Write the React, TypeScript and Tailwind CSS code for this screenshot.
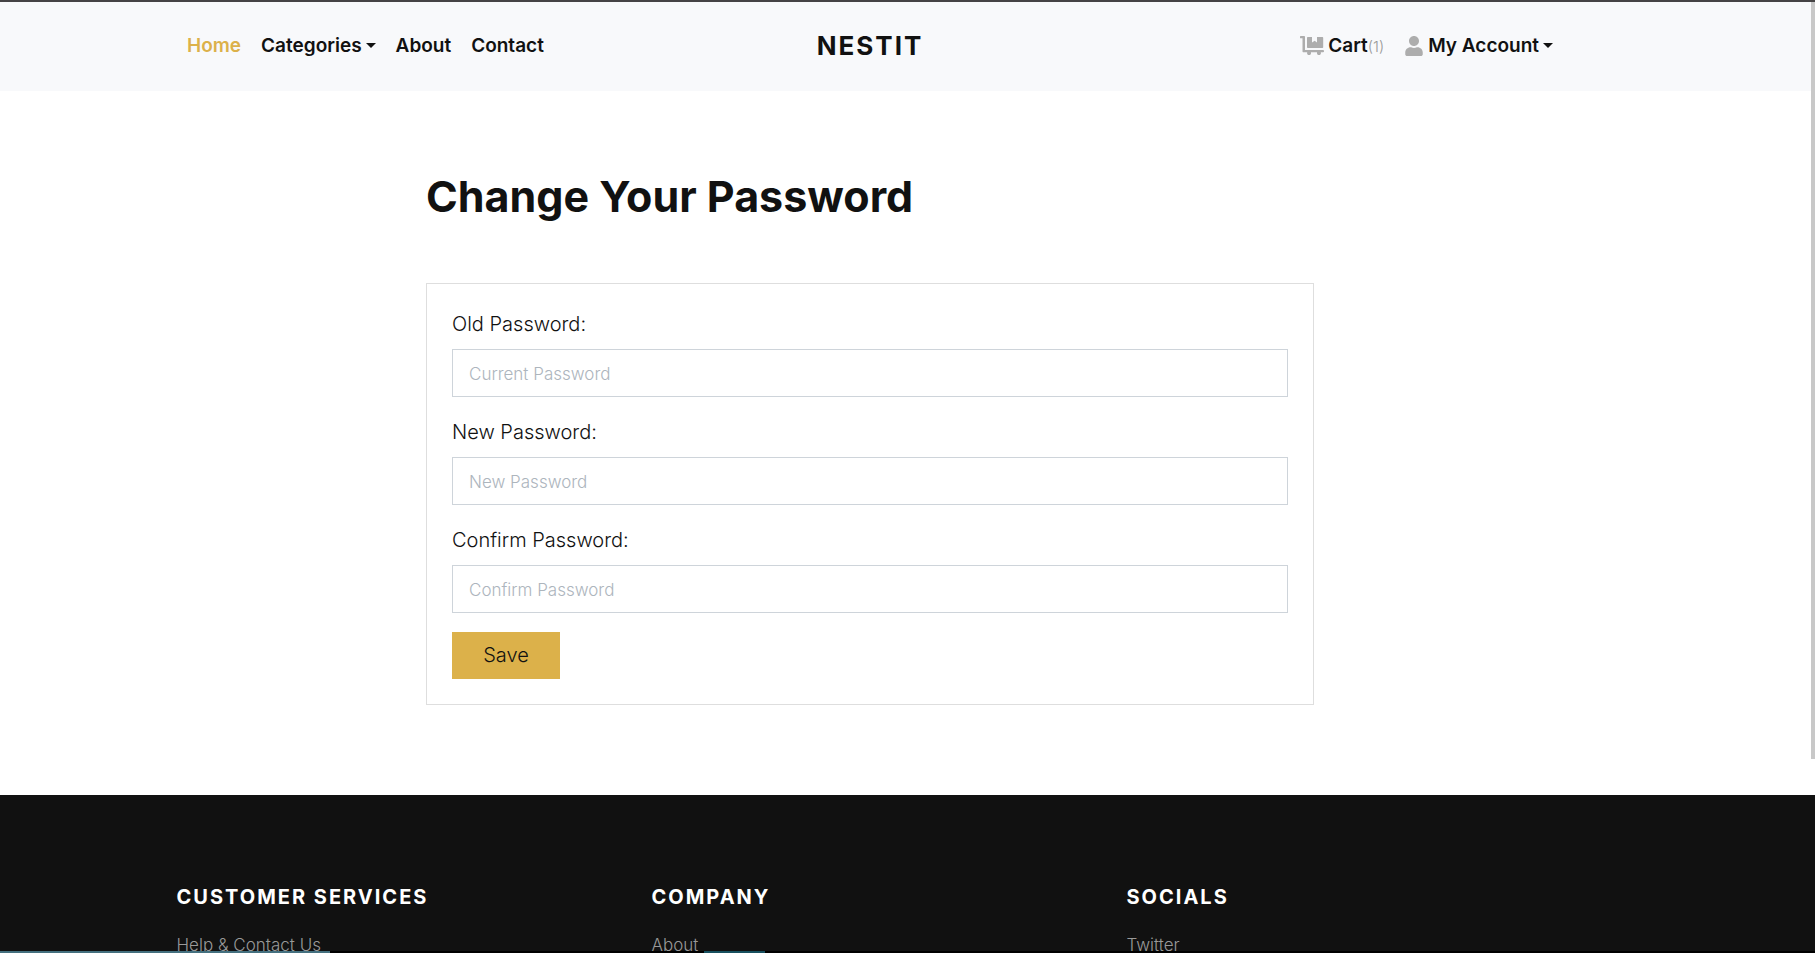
import React from "react";
import { FaUser } from "react-icons/fa";

const navLink = "flex items-center text-[19px] leading-7 font-semibold";

function Caret() {
  return <span className="ml-1 border-x-5 border-t-5 border-x-transparent border-t-[#111]" />;
}

function CartIcon() {
  return (
    <svg viewBox="0 0 24 20" className="mr-1 h-5 w-6 fill-[#adadad]" aria-hidden="true">
      <path d="M.6 0H4c.6 0 1 .4 1 1v13h18c.6 0 1 .3 1 .8v.7c0 .5-.4.8-1 .8h-2.200a2 2 0 1 1-3.700 0h-6.200a2 2 0 1 1-3.700 0H3.500c-.6 0-1-.4-1-1V2.300H.6C.2 2.300 0 2 0 1.700V.6C0 .2.2 0 .6 0Z" />
      <path d="M8 1h4v5.500l2.700-1.700 2.300 1.700V1h5.200c.6 0 1 .4 1 1v9c0 .6-.4 1-1 1H8c-.6 0-1-.4-1-1V2c0-.6.4-1 1-1Z" />
    </svg>
  );
}

function Header() {
  return (
    <header className="border-t-2 border-[#454345] bg-[#f8f9fb] pr-[75px]">
      <nav className="mx-auto grid h-[89px] max-w-[1366px] grid-cols-[1fr_auto_1fr] items-center pb-0.5">
        <div className="flex items-center gap-5">
          <a href="#home" className={`${navLink} text-[#dcb14a]`}>Home</a>
          <button type="button" className={navLink}>Categories<Caret /></button>
          <a href="#about" className={navLink}>About</a>
          <a href="#contact" className={navLink}>Contact</a>
        </div>
        <a href="#home" className="text-[26px] font-bold tracking-[2px]">NESTIT</a>
        <div className="flex items-center justify-end gap-5">
          <a href="#cart" className={navLink}>
            <CartIcon />
            Cart<small className="pt-0.5 text-[15px] font-light text-[#999]">(1)</small>
          </a>
          <button type="button" className={navLink}>
            <FaUser className="mr-1 size-5 text-[#adadad]" aria-hidden="true" />
            My Account<Caret />
          </button>
        </div>
      </nav>
    </header>
  );
}

function Field({ id, label, placeholder }: { id: string; label: string; placeholder: string }) {
  return (
    <div className="flex flex-col gap-2">
      <label htmlFor={id} className="text-xl leading-[33px] font-light">{label}</label>
      <input
        id={id}
        type="password"
        placeholder={placeholder}
        className="h-12 w-full border border-[#ced4da] px-4 pt-0.5 text-[17px] font-light outline-none placeholder:text-[#adb5bd]"
      />
    </div>
  );
}

const columns = [
  { title: "CUSTOMER SERVICES", link: "Help & Contact Us" },
  { title: "COMPANY", link: "About" },
  { title: "SOCIALS", link: "Twitter" },
];

export default function App() {
  return (
    <div className="relative flex h-screen flex-col overflow-hidden bg-white font-['Inter',sans-serif] text-[#111]">
      <Header />
      <main className="shrink-0 pr-[75px]">
        <div className="mx-auto max-w-[888px] pt-[78px] pb-[90px]">
          <h1 className="mb-[60px] text-[43px] leading-[54px] font-bold">Change Your Password</h1>
          <form className="flex flex-col gap-[19px] border border-[#dedede] px-[25px] pt-6 pb-[25px]">
            <Field id="old" label="Old Password:" placeholder="Current Password" />
            <Field id="new" label="New Password:" placeholder="New Password" />
            <Field id="confirm" label="Confirm Password:" placeholder="Confirm Password" />
            <button type="button" className="h-[47px] w-[108px] bg-[#dcb14a] pb-px text-xl leading-7 font-light">Save</button>
          </form>
        </div>
      </main>
      <footer className="flex-1 bg-[#111] pr-[77px]">
        <div className="mx-auto grid max-w-[1425px] grid-cols-3 pt-[87px]">
          {columns.map((column) => (
            <section key={column.title} className="px-5">
              <h2 className="text-xl leading-[30px] font-bold tracking-[2px] text-white">{column.title}</h2>
              <a href="#footer" className="mt-[19px] block text-[17px] leading-7 font-light text-[#999]">{column.link}</a>
            </section>
          ))}
        </div>
      </footer>
      <div className="absolute inset-x-0 bottom-0 flex h-0.5 bg-black">
        <span className="w-[330px] bg-[#44707f]" />
        <span className="ml-[374px] w-[61px] bg-[#17505f]" />
      </div>
      <div className="absolute top-0.5 right-0 h-[757px] w-1 bg-[#c8c8c8]" />
    </div>
  );
}
